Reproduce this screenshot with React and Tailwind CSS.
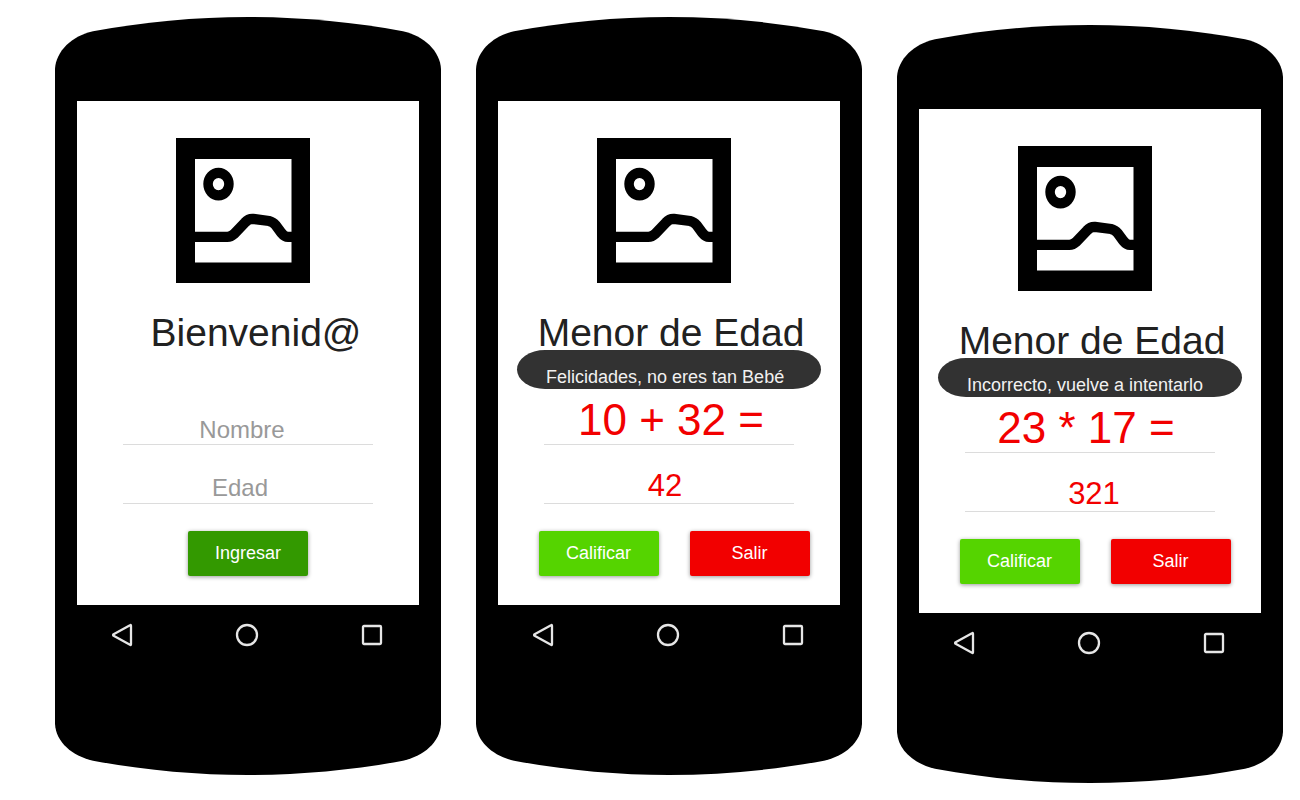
import React from "react";

function PictureIcon() {
  return (
    <svg viewBox="0 0 134 145" className="h-[145px] w-[134px]" role="img" aria-label="Imagen">
      <path fillRule="evenodd" d="M0 0H134V145H0ZM19 21V124.5H115.5V21Z" />
      <path
        fillRule="evenodd"
        d="M42.5 29.7a15.2 16.4 0 1 0 0 32.8a15.2 16.4 0 1 0 0-32.8ZM42.5 40a5.7 6.1 0 1 1 0 12.2a5.7 6.1 0 1 1 0-12.2Z"
      />
      <path
        d="M18 98.8H51.3Q55 98.8 58 96L69 84.5Q72.5 80.5 77 80.8L93 83Q97 84 99.5 87L105.5 95Q108.5 98.8 112 98.8H117"
        fill="none"
        stroke="black"
        strokeWidth="10.3"
      />
    </svg>
  );
}

function TopCap() {
  return (
    <svg viewBox="0 0 386 84" preserveAspectRatio="none" className="block h-[84px] w-full" aria-hidden="true">
      <path d="M0 84V52C1 34 17 19 38 14.3C88 5 140 0 193 0S298 5 348 14.3C369 19 385 34 386 52V84Z" />
    </svg>
  );
}

function BottomCap() {
  return (
    <svg viewBox="0 0 386 54" preserveAspectRatio="none" className="block h-[54px] w-full" aria-hidden="true">
      <path d="M0 0V3C1 21 17 35 38 39.7C88 49 140 54 193 54S298 49 348 39.7C369 35 385 21 386 3V0Z" />
    </svg>
  );
}

const navIcon = "block size-6 fill-none stroke-[#e6e6e6] stroke-[2.3]";

function NavBar() {
  return (
    <nav className="flex h-[116px] items-start justify-between bg-black pt-[18px] pr-[57px] pl-[55px]">
      <button type="button" aria-label="Atrás">
        <svg viewBox="0 0 24 24" className={navIcon} strokeLinejoin="round">
          <path d="M21 2.8V21.2Q21 22.4 20 21.8L3.6 12.8Q2.6 12 3.6 11.2L20 2.2Q21 1.6 21 2.8Z" />
        </svg>
      </button>
      <button type="button" aria-label="Inicio">
        <svg viewBox="0 0 24 24" className={navIcon}>
          <circle cx="12" cy="12" r="10" />
        </svg>
      </button>
      <button type="button" aria-label="Recientes">
        <svg viewBox="0 0 24 24" className={navIcon}>
          <rect x="3" y="3" width="18" height="18" rx="1" />
        </svg>
      </button>
    </nav>
  );
}

function Action({ color, children }) {
  return (
    <button
      type="button"
      className={`h-[45px] w-[120px] rounded-xs pb-0.5 text-lg leading-6 text-white shadow-[0_1px_4px_rgba(0,0,0,0.4)] ${color}`}
    >
      {children}
    </button>
  );
}

const field =
  "block w-full border-b border-[#dcdcdc] bg-transparent text-center outline-none placeholder:text-[#999999] placeholder:opacity-100";

function Phone({ title, titleClass, toast, children, actions }) {
  return (
    <section className="min-w-0">
      <TopCap />
      <div className="bg-black px-[22px]">
        <form className="relative bg-white pt-[37px] pb-[29px]" onSubmit={(e) => e.preventDefault()}>
          <div className="flex justify-center pr-2.5">
            <PictureIcon />
          </div>
          <h1 className={`mt-[26px] text-center text-[39px] leading-[48px] whitespace-nowrap text-[#212121] ${titleClass}`}>
            {title}
          </h1>
          {toast && (
            <p
              role="status"
              className="absolute inset-x-[19px] top-[249px] h-[39px] rounded-[28px/50%] bg-[#323232] pt-[15px] pl-[29px] text-lg leading-6 whitespace-nowrap text-[#f1f1f1]"
            >
              {toast}
            </p>
          )}
          <div className="mx-[46px] mt-[38px] flex flex-col gap-[19px]">{children}</div>
          <div className="mt-[27px] flex justify-center">{actions}</div>
        </form>
      </div>
      <NavBar />
      <BottomCap />
    </section>
  );
}

function Quiz({ toast, question, questionClass, answer, answerClass }) {
  return (
    <Phone
      title="Menor de Edad"
      titleClass="pl-1"
      toast={toast}
      actions={
        <div className="flex gap-[31px] pl-2.5">
          <Action color="bg-[#55d400]">Calificar</Action>
          <Action color="bg-[#f20000]">Salir</Action>
        </div>
      }
    >
      <input
        aria-label="Operación"
        readOnly
        value={question}
        className={`${field} h-[50px] text-[44px] text-[#f20000] ${questionClass}`}
      />
      <input
        aria-label="Respuesta"
        defaultValue={answer}
        className={`${field} h-10 pt-1.5 text-[31px] text-[#f20000] ${answerClass}`}
      />
    </Phone>
  );
}

export default function App() {
  return (
    <main className="min-h-screen bg-white font-['Liberation_Sans',Arial,sans-serif]">
      <div className="grid grid-cols-1 items-start gap-[35px] pt-[17px] pr-[17px] pl-[55px] lg:grid-cols-3">
        <Phone
          title="Bienvenid@"
          titleClass="pl-4"
          actions={<Action color="bg-[#339900]">Ingresar</Action>}
        >
          <input aria-label="Nombre" placeholder="Nombre" className={`${field} h-[50px] pt-5 pr-3 text-2xl`} />
          <input aria-label="Edad" placeholder="Edad" className={`${field} h-10 pt-2 pr-4 text-2xl`} />
        </Phone>
        <Quiz
          toast="Felicidades, no eres tan Bebé"
          question="10 + 32 ="
          questionClass="pl-1"
          answer="42"
          answerClass="pr-2"
        />
        <div className="pt-2">
          <Quiz
            toast="Incorrecto, vuelve a intentarlo"
            question="23 * 17 ="
            questionClass="pr-2"
            answer="321"
            answerClass="pl-2"
          />
        </div>
      </div>
    </main>
  );
}
